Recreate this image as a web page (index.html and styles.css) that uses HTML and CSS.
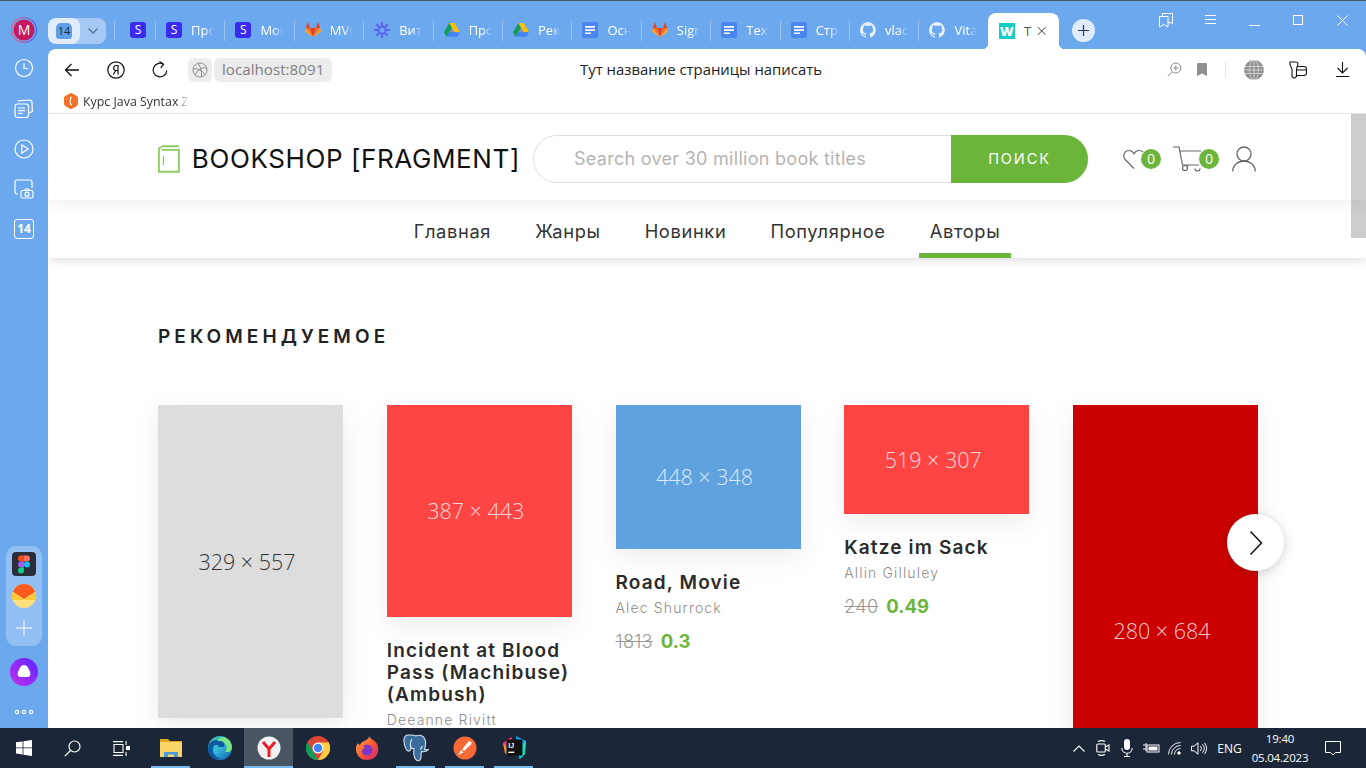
FILE: index.html
```html
<!DOCTYPE html>
<html lang="ru">
<head>
<meta charset="utf-8">
<title>Тут название страницы написать</title>
<link rel="stylesheet" href="styles.css">
</head>
<body>
<svg class="defs" width="0" height="0" aria-hidden="true">
  <symbol id="fox" viewBox="0 0 16 16">
    <path fill="#e24329" d="M8 15.2 11 6H5z"/>
    <path fill="#fc6d26" d="M8 15.2 5 6H.9zM8 15.2 11 6h4.100z"/>
    <path fill="#fca326" d="M.9 6 0 8.900c-.1.300 0 .6.300.8L8 15.200zM15.100 6 16 8.900c.1.300 0 .6-.3.800L8 15.200z"/>
    <path fill="#e24329" d="M.9 6H5L3.300.8c-.1-.3-.5-.3-.6 0zM15.100 6H11L12.700.8c.1-.3.500-.3.600 0z"/>
  </symbol>
  <symbol id="drive" viewBox="0 0 16 16">
    <path fill="#0f9d58" d="M5.300 1 0 10.200l2.600 4.500L8 5.500z"/>
    <path fill="#ffc107" d="M5.300 1h5.400l5.300 9.200h-5.300z"/>
    <path fill="#4285f4" d="M16 10.200H5.300l-2.700 4.500h10.700z"/>
    <path fill="#ea4335" d="M5.300 10.200h5.400l-2.700-4.700z" opacity=".25"/>
  </symbol>
  <symbol id="docs" viewBox="0 0 16 16">
    <rect width="16" height="16" rx="2" fill="#4a86f0"/>
    <path fill="#fff" d="M3 4h10v1.700H3zM3 7.200h10v1.700H3zM3 10.400h6v1.700H3z"/>
  </symbol>
  <symbol id="hub" viewBox="0 0 16 16">
    <path fill="#e6effa" d="M8 0a8 8 0 0 0-2.500 15.600c.4.100.5-.2.500-.4v-1.400c-2.200.5-2.700-1-2.700-1-.4-.9-.9-1.200-.9-1.200-.7-.5.100-.5.100-.5.800.1 1.200.8 1.200.8.700 1.200 1.900.9 2.300.7.100-.5.300-.9.500-1.100-1.800-.2-3.600-.9-3.600-4 0-.9.300-1.600.8-2.100-.1-.2-.4-1 .1-2.100 0 0 .7-.2 2.200.8a7.600 7.600 0 0 1 4 0c1.500-1 2.200-.8 2.200-.8.500 1.100.2 1.900.1 2.100.5.600.8 1.300.8 2.100 0 3.100-1.900 3.700-3.700 3.900.3.300.6.800.6 1.500v2.200c0 .2.100.5.600.4A8 8 0 0 0 8 0z"/>
  </symbol>
  <symbol id="gear" viewBox="0 0 16 16">
    <g stroke="#5b63ee" stroke-width="2" fill="none">
      <circle cx="8" cy="8" r="3.600"/>
      <path d="M8 0v4M8 12v4M0 8h4M12 8h4M2.300 2.300 5 5M11 11l2.700 2.700M13.700 2.300 11 5M5 11l-2.700 2.700"/>
    </g>
  </symbol>
</svg>

<div class="topline"></div>
<div class="app">
  <aside class="sidebar">
    <div class="side-top">
      <svg class="avatar" width="26" height="26" viewBox="0 0 26 26"><defs><linearGradient id="ring" x1="0" y1="0" x2="1" y2="0"><stop offset="0" stop-color="#f2607a"/><stop offset="1" stop-color="#4a62ee"/></linearGradient></defs><circle cx="13" cy="13" r="12.400" fill="none" stroke="url(#ring)" stroke-width="1.200"/><circle cx="13" cy="13" r="10.500" fill="#c8175d"/><text class="avatar-text" x="13" y="18" text-anchor="middle">M</text></svg>
      <div class="side-row side-row-first">
        <svg width="20" height="20" viewBox="0 0 20 20" fill="none" stroke="#fff" stroke-width="1.200"><circle cx="10" cy="10" r="8.500"/><path d="M10 5v5.500h4"/></svg>
      </div>
      <div class="side-row">
        <svg width="20" height="20" viewBox="0 0 20 20" fill="none" stroke="#fff" stroke-width="1.200"><rect x="1" y="5" width="13.500" height="13.500" rx="2.500"/><path d="M4 1.800 15.500 1c1.500 0 2.500 1 2.500 2.500l.3 9-3.800 1.500M4 9h7M4 11.700h7M4 14.400h4.500"/></svg>
      </div>
      <div class="side-row">
        <svg width="20" height="20" viewBox="0 0 20 20" fill="none" stroke="#fff" stroke-width="1.200"><circle cx="10" cy="10" r="9"/><path d="M7.800 5.800v8.400l6.400-4.200z"/></svg>
      </div>
      <div class="side-row">
        <svg width="20" height="20" viewBox="0 0 20 20" fill="none" stroke="#fff" stroke-width="1.200"><path d="M4 15H3a2 2 0 0 1-2-2V3a2 2 0 0 1 2-2h13a2 2 0 0 1 2 2v6"/><rect x="7" y="11.500" width="12" height="7.500" rx="1.500"/><circle cx="13" cy="15.200" r="2"/><path d="M10.500 11.500l1-1.500h3l1 1.500"/></svg>
      </div>
      <div class="side-row">
        <div class="cal">14</div>
      </div>
    </div>
    <div class="side-bottom">
      <div class="side-pill">
        <div class="figma">
          <svg width="12" height="19" viewBox="0 0 12 18"><path fill="#f24e1e" d="M3 0h3v6H3a3 3 0 0 1 0-6z"/><path fill="#ff7262" d="M6 0h3a3 3 0 0 1 0 6H6z"/><path fill="#a259ff" d="M3 6h3v6H3a3 3 0 0 1 0-6z"/><circle cx="9" cy="9" r="3" fill="#1abcfe"/><path fill="#0acf83" d="M3 12h3v3a3 3 0 1 1-3-3z"/></svg>
        </div>
        <svg class="mail" width="24" height="24" viewBox="0 0 24 24"><circle cx="12" cy="12" r="12" fill="#ffdf7e"/><path fill="#ffc531" d="M.6 8.500 12 16 .6 15.800A12 12 0 0 1 .6 8.500zM23.400 8.500 12 16l11.400-.2a12 12 0 0 0 0-7.300z"/><path fill="#fc5a1d" d="M12 0a12 12 0 0 1 11.200 7.800L12 15 .8 7.800A12 12 0 0 1 12 0z"/></svg>
        <svg class="plus" width="16" height="16" viewBox="0 0 16 16" stroke="#fff" stroke-width="1"><path d="M8 0v16M0 8h16"/></svg>
      </div>
      <svg class="alice" width="28" height="28" viewBox="0 0 28 28"><defs><linearGradient id="al" x1="0" y1="1" x2="1" y2="0"><stop offset="0" stop-color="#c42ff0"/><stop offset="1" stop-color="#5a25ff"/></linearGradient></defs><circle cx="14" cy="14" r="14" fill="url(#al)"/><path fill="#fff" d="M14 7c3 0 4.500 3 6 7 1 2.800 0 5-3 5h-6c-3 0-4-2.200-3-5 1.500-4 3-7 6-7z"/></svg>
      <svg class="dots" width="20" height="12" viewBox="0 0 20 12" fill="none" stroke="#fff" stroke-width="1.200"><circle cx="3" cy="6" r="1.700"/><circle cx="10" cy="6" r="1.700"/><circle cx="17" cy="6" r="1.700"/></svg>
    </div>
  </aside>

  <div class="browser">
    <div class="tabstrip">
      <div class="group">
        <div class="group-main"><span class="group-badge">14</span></div>
        <div class="group-arrow"><svg width="12" height="8" viewBox="0 0 12 8" fill="none" stroke="#4c6f9c" stroke-width="1.300"><path d="M1.500 1.500 6 6l4.500-4.500"/></svg></div>
      </div>
      <div class="tab tab-pin"><span class="s-icon">S</span></div>
      <div class="tab"><span class="s-icon">S</span><span class="tab-label">Про</span></div>
      <div class="tab"><span class="s-icon">S</span><span class="tab-label">Мое</span></div>
      <div class="tab"><svg class="fav" viewBox="0 0 16 16"><use href="#fox"/></svg><span class="tab-label">MVC</span></div>
      <div class="tab"><svg class="fav" viewBox="0 0 16 16"><use href="#gear"/></svg><span class="tab-label">Вита</span></div>
      <div class="tab"><svg class="fav" viewBox="0 0 16 16"><use href="#drive"/></svg><span class="tab-label">Про</span></div>
      <div class="tab"><svg class="fav" viewBox="0 0 16 16"><use href="#drive"/></svg><span class="tab-label">Рек</span></div>
      <div class="tab"><svg class="fav" viewBox="0 0 16 16"><use href="#docs"/></svg><span class="tab-label">Осн</span></div>
      <div class="tab"><svg class="fav" viewBox="0 0 16 16"><use href="#fox"/></svg><span class="tab-label">Sign</span></div>
      <div class="tab"><svg class="fav" viewBox="0 0 16 16"><use href="#docs"/></svg><span class="tab-label">Техн</span></div>
      <div class="tab"><svg class="fav" viewBox="0 0 16 16"><use href="#docs"/></svg><span class="tab-label">Стру</span></div>
      <div class="tab"><svg class="fav" viewBox="0 0 16 16"><use href="#hub"/></svg><span class="tab-label">vlad</span></div>
      <div class="tab"><svg class="fav" viewBox="0 0 16 16"><use href="#hub"/></svg><span class="tab-label">Vital</span></div>
      <div class="tab-active">
        <span class="w-icon">W</span>
        <span class="active-label">Т</span>
        <svg width="10" height="10" viewBox="0 0 10 10" stroke="#333" stroke-width="1" fill="none"><path d="M1 1l8 8M9 1 1 9"/></svg>
      </div>
      <div class="newtab"><svg width="13" height="13" viewBox="0 0 13 13" stroke="#2b3a4d" stroke-width="1.200"><path d="M6.500 1v11M1 6.500h11"/></svg></div>
      <div class="winctl">
        <div class="winbtn"><svg width="14" height="15" viewBox="0 0 14 15" fill="none" stroke="#fff" stroke-width="1"><path d="M.5 3.500h8.500v10.500L4.800 11.500.5 14z"/><path d="M3.500 3.500V.5h10v10l-4.500-1.500"/></svg></div>
        <div class="winbtn"><svg width="11" height="10" viewBox="0 0 11 10" stroke="#fff" stroke-width="1"><path d="M0 .5h11M0 4.500h11M0 8.500h11"/></svg></div>
        <div class="winbtn"><svg width="11" height="11" viewBox="0 0 11 11" stroke="#fff" stroke-width="1"><path d="M0 10.500h11"/></svg></div>
        <div class="winbtn"><svg width="10" height="10" viewBox="0 0 10 10" stroke="#fff" stroke-width="1" fill="none"><rect x=".5" y=".5" width="9" height="9"/></svg></div>
        <div class="winbtn"><svg width="11" height="11" viewBox="0 0 11 11" stroke="#fff" stroke-width="1" fill="none"><path d="M.5.500l10 10M10.500.500l-10 10"/></svg></div>
      </div>
    </div>

    <div class="window">
      <div class="toolbar">
        <div class="tool-left">
          <div class="tbtn"><svg width="16" height="14" viewBox="0 0 16 14" fill="none" stroke="#111" stroke-width="1.300"><path d="M15 7H1.500M7.500 1 1.500 7l6 6"/></svg></div>
          <div class="tbtn"><svg width="18" height="18" viewBox="0 0 18 18" fill="none" stroke="#111" stroke-width="1.200"><circle cx="9" cy="9" r="8.200"/><path d="M11 13.500v-9H9.200C7.600 4.500 6.700 5.500 6.700 7s.9 2.500 2.500 2.500H11M8.700 9.500 6.400 13.500"/></svg></div>
          <div class="tbtn"><svg width="16" height="17" viewBox="0 0 16 17" fill="none" stroke="#111" stroke-width="1.200"><path d="M11.500 3.200A6.800 6.800 0 1 0 14.800 9.500"/><path d="M7.500.5l4 2.800-2.800 3.500"/></svg></div>
          <div class="chip-globe"><svg width="16" height="16" viewBox="0 0 16 16" fill="none" stroke="#8b8b8b" stroke-width="1"><circle cx="8" cy="8" r="7"/><path d="M1.500 6.500c4 0 9 2 11.500 6M14.500 6c-4-1-9 1-11 7M6 1.500c2.500 3 4 7 3.500 13"/></svg></div>
          <div class="url">localhost:8091</div>
        </div>
        <div class="page-title">Тут название страницы написать</div>
        <div class="tool-right">
          <div class="tsmall"><svg width="15" height="15" viewBox="0 0 15 15" fill="none" stroke="#8b8b8b" stroke-width="1"><circle cx="8.800" cy="6" r="5"/><path d="M5.200 9.800.8 14.200M8.800 3.500v5M6.300 6h5"/></svg></div>
          <div class="tsmall"><svg width="10" height="13" viewBox="0 0 10 13" fill="#8f8f8f"><path d="M0 1a1 1 0 0 1 1-1h8a1 1 0 0 1 1 1v12L5 10.500 0 13z"/></svg></div>
          <div class="tsep"></div>
          <div class="tbtn"><svg width="20" height="20" viewBox="0 0 20 20"><circle cx="10" cy="10" r="10" fill="#8f8f8f"/><g fill="none" stroke="#fff" stroke-width=".8" opacity=".7"><path d="M0 6.500h20M0 10h20M0 13.500h20M10 0v20"/><ellipse cx="10" cy="10" rx="4.500" ry="10"/></g></svg></div>
          <div class="tbtn"><svg width="18" height="18" viewBox="0 0 18 18" fill="none" stroke="#111" stroke-width="1.100"><path d="M1 1h6c1.500 0 2 1 2 2l-1.500 5v7.500L6 17H4.500L3 15.500V8L1 3.500z"/><path d="M8.500 5.500H15c1.500 0 2.500 1 2.500 2.500v4c0 1.500-1 2.500-2.500 2.500H7.500M8 9h9.500"/></svg></div>
          <div class="tbtn"><svg width="13" height="15" viewBox="0 0 13 15" fill="none" stroke="#111" stroke-width="1.100"><path d="M6.500 0v11M1.500 6l5 5 5-5M0 14.500h13"/></svg></div>
        </div>
      </div>
      <div class="bookmarks">
        <svg class="bm-icon" width="16" height="16" viewBox="0 0 16 16"><path fill="#f4712a" d="M6.500.500a3 3 0 0 1 3 0l4 2.300a3 3 0 0 1 1.500 2.600v5.200a3 3 0 0 1-1.500 2.600l-4 2.300a3 3 0 0 1-3 0l-4-2.300A3 3 0 0 1 1 10.600V5.400a3 3 0 0 1 1.500-2.600z"/><path fill="none" stroke="#fff" stroke-width="1.200" d="M8.800 4C7.300 4 7.500 5.300 7.500 6.500S7.300 8 6.500 8c.8 0 1 .3 1 1.500S7.300 12 8.800 12"/></svg>
        <span class="bm-label">Курс Java Syntax Z</span>
      </div>

      <main class="page">
        <header class="shop-head">
          <div class="shop-inner">
            <a class="logo">
              <svg width="24" height="30" viewBox="0 0 24 30" fill="none" stroke="#8ccb63" stroke-width="2"><path d="M4 1h19M1 5a3 3 0 0 1 3-3M1 5v24h22V5H4"/><path d="M6 12v10" stroke-width="1.500"/></svg>
              <span class="logo-text">BOOKSHOP [FRAGMENT]</span>
            </a>
            <div class="search">
              <span class="search-input">Search over 30 million book titles</span>
              <span class="search-btn">ПОИСК</span>
            </div>
            <div class="user-icons">
              <div class="ico ico-heart">
                <svg width="22" height="22" viewBox="0 0 22 22" fill="none" stroke="#666" stroke-width="1.200"><path d="M11 20.500 2.200 11.500C-.5 8.500.8 2.500 6 2.500c2.500 0 4 1.500 5 3.200 1-1.700 2.500-3.200 5-3.200 1.500 0 3 .5 4 1.500"/></svg>
                <span class="badge">0</span>
              </div>
              <div class="ico ico-cart">
                <svg width="28" height="26" viewBox="0 0 28 26" fill="none" stroke="#666" stroke-width="1.200"><path d="M0 1h6l3.500 18H26M7 5h21"/><circle cx="12" cy="22" r="2.500"/><path d="M22 22.500a2.500 2.500 0 0 0 5 0M15 19.500v1"/></svg>
                <span class="badge">0</span>
              </div>
              <div class="ico ico-user">
                <svg width="24" height="26" viewBox="0 0 24 26" fill="none" stroke="#666" stroke-width="1.300"><circle cx="12" cy="8" r="7"/><path d="M.7 25.500C1 19 6 15 12 15s11 4 11.300 10.500"/></svg>
              </div>
            </div>
          </div>
        </header>
        <nav class="menu">
          <a class="menu-link">Главная</a>
          <a class="menu-link">Жанры</a>
          <a class="menu-link">Новинки</a>
          <a class="menu-link">Популярное</a>
          <a class="menu-link menu-link-active">Авторы</a>
        </nav>
        <section class="recommended">
          <h2 class="section-title">РЕКОМЕНДУЕМОЕ</h2>
          <div class="carousel">
            <article class="card">
              <div class="cover cover-grey" style="aspect-ratio:329/557">329 × 557</div>
            </article>
            <article class="card">
              <div class="cover cover-coral" style="aspect-ratio:387/443">387 × 443</div>
              <h3 class="book-title">Incident at Blood Pass (Machibuse) (Ambush)</h3>
              <p class="book-author">Deeanne Rivitt</p>
            </article>
            <article class="card">
              <div class="cover cover-blue" style="aspect-ratio:448/348">448 × 348</div>
              <h3 class="book-title">Road, Movie</h3>
              <p class="book-author">Alec Shurrock</p>
              <p class="book-price"><s class="old">1813</s><b class="new">0.3</b></p>
            </article>
            <article class="card">
              <div class="cover cover-coral" style="aspect-ratio:519/307">519 × 307</div>
              <h3 class="book-title">Katze im Sack</h3>
              <p class="book-author">Allin Gilluley</p>
              <p class="book-price"><s class="old">240</s><b class="new">0.49</b></p>
            </article>
            <article class="card">
              <div class="cover cover-red" style="aspect-ratio:280/684">280 × 684</div>
            </article>
            <button class="next" aria-label="next"><svg width="14" height="26" viewBox="0 0 14 26" fill="none" stroke="#111" stroke-width="1.500"><path d="M1.500 1.500 12.500 13l-11 11.500"/></svg></button>
          </div>
        </section>
        <div class="scroll-thumb"></div>
      </main>
    </div>
  </div>
</div>

<footer class="taskbar">
  <div class="task-left">
    <div class="tk tk-win"><svg width="16" height="16" viewBox="0 0 16 16" fill="#fff"><path d="M0 2.300 6.600 1.400v6.100H0zM7.400 1.300 16 0v7.500H7.400zM0 8.300h6.600v6.200L0 13.600zM7.400 8.300H16V16l-8.600-1.300z"/></svg></div>
    <div class="tk"><svg width="17" height="17" viewBox="0 0 17 17" fill="none" stroke="#fff" stroke-width="1.200"><circle cx="10.500" cy="6.500" r="5.500"/><path d="M6.500 10.500.8 16.200"/></svg></div>
    <div class="tk"><svg width="17" height="15" viewBox="0 0 17 15" fill="none" stroke="#fff" stroke-width="1.100"><path d="M0 .6h10M0 14.400h10M1 3.500h9v8H1zM13 0v4M13 11v4"/><rect x="13.500" y="5.500" width="3" height="3" fill="#fff"/></svg></div>
    <div class="tk tk-open"><svg width="22" height="20" viewBox="0 0 22 20"><path fill="#e0a520" d="M0 1h8l2 2h12v4H0z"/><path fill="#f8d469" d="M0 4h22v15H0z"/><path fill="#4a9bd8" d="M4 19v-5h14v5h-4v-2.500H8V19z"/></svg></div>
    <div class="tk"><svg width="24" height="24" viewBox="0 0 24 24"><defs><linearGradient id="ed" x1="0" y1="0" x2="1" y2="1"><stop offset="0" stop-color="#3bc8a0"/><stop offset=".5" stop-color="#36b5dd"/><stop offset="1" stop-color="#0c59a4"/></linearGradient></defs><circle cx="12" cy="12" r="12" fill="url(#ed)"/><path fill="#0c59a4" d="M0 13C0 6 6 3 11 4c5 1 6 4 5 7h-5c-1-3-5-3-6 1-1 5 3 10 9 11C6 25 0 20 0 13z"/><path fill="#7ae582" d="M16 1c5 1.500 8 6 8 10 0 3-2 5-4 5h-3c2-2 2-5 1-7-.8-1.800-3-4-6-4-1 0-2 0-3 .5C10 3 13 .5 16 1z"/></svg></div>
    <div class="tk tk-on"><svg width="24" height="24" viewBox="0 0 24 24"><circle cx="12" cy="12" r="11.500" fill="#f2f2f2"/><path fill="none" stroke="#e8202a" stroke-width="3" d="M6 6l6 7 6-7M12 13v8"/></svg></div>
    <div class="tk"><svg width="24" height="24" viewBox="0 0 24 24"><circle cx="12" cy="12" r="12" fill="#db4437"/><path fill="#0f9d58" d="M1.600 6 7 15.500 12 24A12 12 0 0 1 1.600 6z"/><path fill="#ffcd40" d="M12 24a12 12 0 0 0 10.400-18L17 15.500z"/><path fill="#ffcd40" d="M12 6.500h10.400a12 12 0 0 1 0 11L17 15z"/><circle cx="12" cy="12" r="5.500" fill="#fff"/><circle cx="12" cy="12" r="4.300" fill="#4285f4"/></svg></div>
    <div class="tk"><svg width="24" height="24" viewBox="0 0 24 24"><defs><linearGradient id="ff" x1="0" y1="0" x2="1" y2="1"><stop offset="0" stop-color="#ffbd4f"/><stop offset=".5" stop-color="#ff5a2e"/><stop offset="1" stop-color="#c9207e"/></linearGradient></defs><path fill="url(#ff)" d="M14 0c1 3 6 4 8 8 3 6 1 16-10 16C5 24 1 19 1 13c0-3 1-5 2-6 0 1 1 2 2 2 1-3 5-4 6-5 2-1 3-2 3-4z"/><circle cx="12" cy="14" r="5.500" fill="#7b36c9"/><path fill="#ff7139" d="M3 9c2-1 6 0 7 3-2 0-3 1-2 2L4 16z"/></svg></div>
    <div class="tk tk-open"><svg width="26" height="28" viewBox="0 0 26 28" stroke="#d8e4ee" stroke-width="1.100" fill="#3a6d9e"><path d="M5 1c-3 0-4.500 3-4 7 .5 4 2 8 4 9 2 .5 3-2 3-3 1 .5 2 .5 3 .5-.5 4 0 10 3 12 3 1 4-2 4-4s0-4 .5-5c3 .5 6-.5 7-2-1 .3-3 .5-4 0 1-3 2-6 .5-10C20.500 1 16 .5 13 2 10 .5 7 1 5 1z"/><path fill="none" d="M8 14c-1-3-1-6 1-9M19 12c0 2-1 3-2 3"/></svg></div>
    <div class="tk tk-open"><svg width="24" height="24" viewBox="0 0 24 24"><circle cx="12" cy="12" r="11.500" fill="#f76935"/><path fill="#fff" d="M5 19l3-5 2.500 2.500zM9 13.500 15 6c1.500-1.500 3.500-.5 3.500 1s-1 2-1.500 2.500L11 15z"/></svg></div>
    <div class="tk tk-open"><svg width="24" height="24" viewBox="0 0 24 24"><path fill="#f5317f" d="M1 7l8-6 3 6-7 12z"/><path fill="#fe8d2c" d="M1 7l4 4v8L3 17z"/><path fill="#1ca2f2" d="M14 0l10 5-2 14-5 4z"/><path fill="#1ae0c1" d="M24 5l-1 13-5 5 2-14z"/><rect x="4.500" y="3.500" width="16" height="16" fill="#111"/><text class="ij" x="6.200" y="11.500">IJ</text><rect x="6.300" y="15.600" width="6" height="1.400" fill="#fff"/></svg></div>
  </div>
  <div class="tray">
    <div class="tr"><svg width="12" height="7" viewBox="0 0 12 7" fill="none" stroke="#fff" stroke-width="1.100"><path d="M.5 6.500 6 1l5.500 5.500"/></svg></div>
    <div class="tr"><svg width="14" height="16" viewBox="0 0 14 16" fill="none" stroke="#fff" stroke-width="1.100"><rect x=".8" y="4" width="8.500" height="8" rx="1"/><path d="M9.300 7 13 5v6L9.300 9M2 1.500c2-1 5-1 7 0M2 14.500c2 1 5 1 7 0"/></svg></div>
    <div class="tr"><svg width="12" height="18" viewBox="0 0 12 18"><rect x="3" y="0" width="6" height="11" rx="3" fill="#fff"/><path fill="none" stroke="#fff" stroke-width="1.100" d="M.8 9c0 7 10.400 7 10.400 0M6 14v3M3 17.500h6"/></svg></div>
    <div class="tr"><svg width="17" height="12" viewBox="0 0 17 12" fill="none" stroke="#fff" stroke-width="1"><rect x="4" y="3" width="12" height="7"/><rect x="5.500" y="4.500" width="9" height="4" fill="#fff" stroke="none"/><path d="M0 3h3M0 7h3M3 1v8"/></svg></div>
    <div class="tr"><svg width="14" height="13" viewBox="0 0 14 13" fill="none" stroke="#fff" stroke-width=".9"><path d="M.5 12.500A12 12 0 0 1 12.500.5M3.500 12.500A9 9 0 0 1 12.500 3.500M6.500 12.500a6 6 0 0 1 6-6"/><circle cx="11" cy="11" r="1.300" fill="#fff"/></svg></div>
    <div class="tr"><svg width="16" height="13" viewBox="0 0 16 13" fill="none" stroke="#fff" stroke-width="1"><path d="M.5 4.200h2.500L7 .8v11.400L3 8.800H.5zM9.500 4a4 4 0 0 1 0 5M11.500 2.300a6.500 6.500 0 0 1 0 8.400M13.500.8a9 9 0 0 1 0 11.400"/></svg></div>
    <div class="lang">ENG</div>
    <div class="clock"><span>19:40</span><span>05.04.2023</span></div>
    <div class="notify"><svg width="16" height="15" viewBox="0 0 16 15" fill="none" stroke="#fff" stroke-width="1"><path d="M.5.500h15v11h-5L8 14l-2.500-2.500h-5z"/></svg></div>
  </div>
</footer>
</body>
</html>
```

FILE: styles.css
```css
* { box-sizing: border-box; }
html, body { margin: 0; padding: 0; width: 1366px; height: 768px; overflow: hidden; }
body { display: flex; flex-direction: column; background: #6ca8ee; font-family: "Inter", "Liberation Sans", sans-serif; }
.defs { position: absolute; }
.topline { height: 1px; background: #4a5568; flex: none; }
.app { display: flex; height: 727px; flex: none; }

/* sidebar */
.sidebar { width: 48px; flex: none; display: flex; flex-direction: column; justify-content: space-between; align-items: center; padding: 16px 0 10px; }
.side-top, .side-bottom { display: flex; flex-direction: column; align-items: center; }
.avatar { display: block; margin-bottom: 5px; }
.avatar-text { font: 14px "Open Sans", sans-serif; fill: #fff; }
.side-row { width: 48px; height: 40px; display: flex; align-items: center; justify-content: center; }
.side-row-first { margin-bottom: 1px; }
.cal { width: 20px; height: 20px; border: 1.200px solid #fff; border-radius: 3px; color: #fff; font: 700 12px/18px "Open Sans", sans-serif; text-align: center; }
.side-pill { width: 36px; height: 100px; border-radius: 10px; background: #92bff4; display: flex; flex-direction: column; align-items: center; padding-top: 6px; margin-bottom: 12px; }
.figma { width: 24px; height: 24px; background: #2b2d38; border-radius: 4px; display: flex; align-items: center; justify-content: center; }
.mail { margin-top: 8px; }
.plus { margin-top: 12px; }
.alice { display: block; margin-bottom: 20px; }
.dots { display: block; }

/* tabs */
.browser { flex: 1; display: flex; flex-direction: column; min-width: 0; }
.tabstrip { height: 48px; flex: none; display: flex; position: relative; }
.group { width: 58px; height: 26px; margin-top: 17px; display: flex; border-radius: 8px; overflow: hidden; background: #a5c8f5; flex: none; margin-right: 8px; }
.group-main { width: 32px; background: #e0ecfb; display: flex; align-items: center; justify-content: center; border-radius: 8px; }
.group-badge { width: 16px; height: 16px; background: #5f9fe8; color: #1c2c44; font: 11px/16px "Open Sans", sans-serif; text-align: center; border-radius: 5px 5px 3px 3px; }
.group-arrow { flex: 1; display: flex; align-items: center; justify-content: center; }
.tab { flex: none; width: 69.420px; height: 20px; margin-top: 20px; border-left: 1px solid #9cc4f3; display: flex; align-items: center; padding: 0 0 2px 10px; gap: 9px; }
.tab-pin { width: 41px; padding-left: 15px; }
.s-icon { width: 16px; height: 16px; flex: none; border-radius: 3px; background: #3b2bf0; color: #fff; font: 12px/16px "Open Sans", sans-serif; text-align: center; }
.fav { width: 16px; height: 16px; flex: none; }
.tab-label { width: 23px; overflow: hidden; white-space: nowrap; color: #fff; font: 13px/16px "Open Sans", sans-serif; -webkit-mask-image: linear-gradient(to right, #000 60%, transparent); mask-image: linear-gradient(to right, #000 60%, transparent); }
.tab-active { flex: none; width: 71px; height: 36px; margin-top: 12px; background: #fff; border-radius: 8px 8px 0 0; display: flex; align-items: center; padding: 0 12px 0 11px; position: relative; }
.tab-active::before, .tab-active::after { content: ""; position: absolute; bottom: 0; width: 6px; height: 6px; }
.tab-active::before { left: -6px; background: radial-gradient(circle at 0 0, transparent 6px, #fff 6.500px); }
.tab-active::after { right: -6px; background: radial-gradient(circle at 100% 0, transparent 6px, #fff 6.500px); }
.w-icon { width: 16px; height: 16px; flex: none; background: #14cdc0; color: #fff; font: 800 13px/16px "Open Sans", sans-serif; text-align: center; }
.active-label { width: 9px; margin-left: 9px; margin-right: 5px; white-space: nowrap; color: #555; font: 13px/16px "Open Sans", sans-serif; }
.newtab { width: 23px; height: 23px; margin: 18px 0 0 13px; border-radius: 50%; background: #e0ecfb; display: flex; align-items: center; justify-content: center; flex: none; }
.winctl { margin-left: auto; display: flex; height: 38px; padding-right: 2px; }
.winbtn { width: 44px; height: 38px; display: flex; align-items: center; justify-content: center; }

/* window */
.window { flex: 1; min-height: 0; background: #fff; border-radius: 8px 8px 0 0; display: flex; flex-direction: column; overflow: hidden; }
.toolbar { height: 41px; flex: none; display: flex; align-items: center; }
.tool-left { width: 532px; flex: none; display: flex; align-items: center; padding-left: 2px; }
.tbtn { width: 44px; height: 40px; display: flex; align-items: center; justify-content: center; flex: none; }
.chip-globe { width: 24px; height: 24px; margin-left: 6px; background: #ececec; border-radius: 6px; display: flex; align-items: center; justify-content: center; }
.url { width: 118px; height: 24px; margin-left: 2px; background: #ececec; border-radius: 6px; color: #808080; font: 15.200px/23px "Open Sans", sans-serif; padding-left: 8px; white-space: nowrap; }
.page-title { color: #222; font: 14.900px/20px "Open Sans", sans-serif; white-space: nowrap; margin-bottom: 2px; }
.tool-right { margin-left: auto; display: flex; align-items: center; padding-right: 2px; }
.tsmall { width: 27px; height: 40px; display: flex; align-items: center; justify-content: center; }
.tsep { width: 1px; height: 16px; background: #e3e3e3; margin: 0 6px 0 10px; }
.bookmarks { height: 24px; flex: none; border-bottom: 1px solid #e5e5e5; display: flex; align-items: center; padding-left: 15px; }
.bm-icon { flex: none; margin-bottom: 1px; }
.bm-label { width: 106px; margin-left: 4px; overflow: hidden; white-space: nowrap; color: #333; font: 12.400px/16px "Open Sans", sans-serif; -webkit-mask-image: linear-gradient(to right, #000 88%, transparent); mask-image: linear-gradient(to right, #000 88%, transparent); }

/* page */
.page { flex: 1; min-height: 0; overflow: hidden; position: relative; }
.shop-head { height: 86px; background: #fff; position: relative; z-index: 2; box-shadow: 0 4px 14px rgba(0,0,0,.06); }
.shop-inner { height: 90px; margin: 0 110px; display: flex; align-items: center; }
.logo { width: 362px; flex: none; display: flex; align-items: center; gap: 12px; margin-top: -1px; margin-right: 13px; }
.logo-text { font-size: 26px; letter-spacing: .6px; color: #111; white-space: nowrap; }
.search { width: 555px; height: 48px; flex: none; border: 1px solid #ddd; border-radius: 24px; display: flex; align-items: center; }
.search-input { flex: 1; padding: 0 0 2px 40px; color: #b4b4b4; font-size: 18px; letter-spacing: .28px; white-space: nowrap; }
.search-btn { width: 137px; height: 48px; margin: -1px; padding-bottom: 1px; background: #6cb53b; border-radius: 0 24px 24px 0; color: #fff; font-size: 14.500px; font-weight: 400; letter-spacing: 1.900px; display: flex; align-items: center; justify-content: center; }
.user-icons { display: flex; align-items: center; margin-left: 35px; }
.ico { position: relative; display: flex; align-items: center; }
.ico-heart { width: 50px; }
.ico-cart { width: 59px; }
.badge { position: absolute; top: 50%; width: 20px; height: 20px; margin-top: -10px; border-radius: 50%; background: #6cb53b; color: #fff; font-size: 13px; line-height: 20px; text-align: center; }
.ico-heart .badge { left: 18px; }
.ico-cart .badge { left: 26px; }
.menu { height: 58px; background: #fff; position: relative; z-index: 1; box-shadow: 0 2px 10px rgba(0,0,0,.14); display: flex; justify-content: center; gap: 22px; }
.menu-link { padding: 0 11px; height: 58px; line-height: 62px; color: #333; font-size: 18.300px; letter-spacing: .65px; white-space: nowrap; border-bottom: 5px solid transparent; }
.menu-link-active { border-bottom-color: #6cb53b; }
.recommended { padding: 67px 110px 0; }
.section-title { margin: 0 0 56px; font-size: 19px; line-height: 24px; font-weight: 600; letter-spacing: 4.070px; color: #222; }
.carousel { position: relative; display: grid; grid-template-columns: repeat(5, 185px); gap: 43.750px; align-items: start; }
.cover { display: flex; align-items: center; justify-content: center; padding: 0 7px 0 0; font: 300 21.500px "Open Sans", sans-serif; color: rgba(255,255,255,.8); box-shadow: 0 8px 28px rgba(0,0,0,.08); }
.cover-grey { background: #ddd; color: #333; }
.cover-coral { background: #f44; }
.cover-blue { background: #5fa2dd; }
.cover-red { background: #c00; }
.book-title { margin: 23px 0 0; font-size: 19px; line-height: 22px; font-weight: 600; letter-spacing: 1.150px; color: #2b2b2b; }
.book-author { margin: 3px 0 0; font-size: 14px; line-height: 22px; font-weight: 300; letter-spacing: 1.150px; color: #8d8d8d; }
.book-price { margin: 10px 0 0; display: flex; align-items: baseline; gap: 8px; line-height: 24px; }
.old { font-size: 18px; color: #999; font-weight: 300; letter-spacing: .3px; }
.new { font-size: 18.500px; font-weight: 700; color: #6cb53b; }
.next { position: absolute; top: 109px; right: -28px; width: 57px; height: 57px; padding: 0; border: 0; border-radius: 50%; background: #fff; box-shadow: 0 2px 12px rgba(0,0,0,.18); display: flex; align-items: center; justify-content: center; }
.scroll-thumb { position: absolute; top: 0; right: 0; width: 15px; height: 124px; background: rgba(0,0,0,.2); z-index: 3; }

/* taskbar */
.taskbar { height: 40px; flex: none; background: #1b2738; display: flex; justify-content: space-between; color: #fff; }
.task-left { display: flex; }
.tk { width: 49px; height: 40px; display: flex; align-items: center; justify-content: center; position: relative; flex: none; }
.tk-win { width: 48px; }
.tk-open::after, .tk-on::after { content: ""; position: absolute; left: 5px; right: 5px; bottom: 0; height: 2px; background: #76b9ed; }
.tk-on { background: #4a5563; }
.tk-on::after { left: 0; right: 0; }
.ij { font: 700 7px "Liberation Sans", sans-serif; fill: #fff; }
.tray { display: flex; align-items: center; height: 40px; }
.tr { width: 24px; height: 40px; display: flex; align-items: center; justify-content: center; flex: none; }
.lang { width: 37px; margin-right: 2px; font: 12px "Open Sans", sans-serif; text-align: center; }
.clock { width: 60px; display: flex; flex-direction: column; align-items: center; font: 11.500px/19px "Open Sans", sans-serif; letter-spacing: -.2px; }
.notify { width: 56px; display: flex; justify-content: center; padding-right: 10px; }
```
